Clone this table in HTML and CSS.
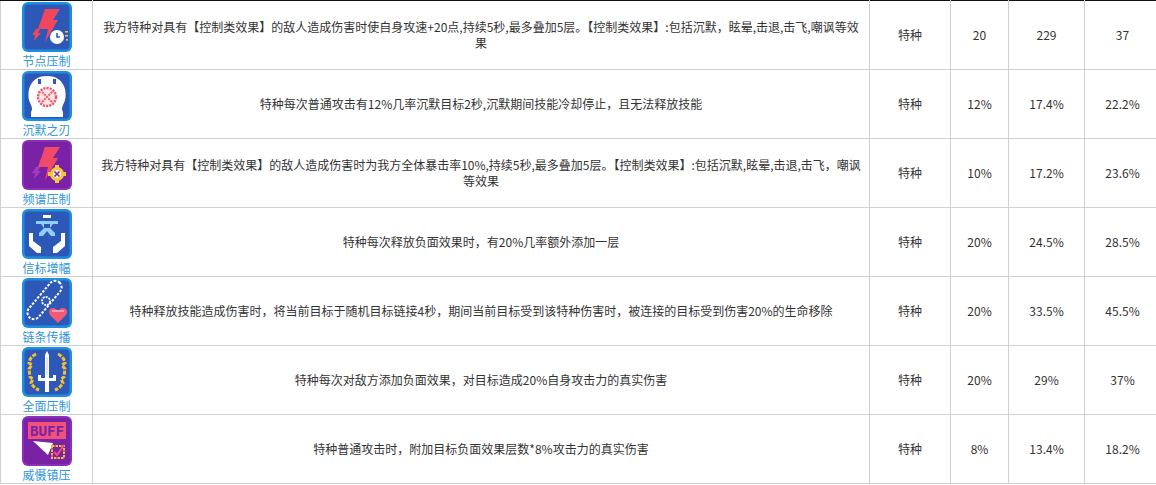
FILE: index.html
```html
<!DOCTYPE html>
<html lang="zh">
<head>
<meta charset="utf-8">
<title>特种芯片</title>
<link rel="stylesheet" href="styles.css">
</head>
<body>
<div class="top-line"></div>
<table class="chips">
<colgroup>
<col class="c-icon"><col class="c-desc"><col class="c-type"><col class="c-v1"><col class="c-v2"><col class="c-v3">
</colgroup>
<tbody>
<tr>
<td class="icon-cell">
<svg class="icon" viewBox="0 0 50 50">
<rect width="50" height="50" rx="6" fill="#1b8fe0"/>
<rect x="2.5" y="2.5" width="45" height="45" rx="4" fill="#2e58b8"/>
<polygon points="23,7 38,7 31,18 36,18 23,40 26,27 16,27" fill="#f0475d"/>
<polygon points="14,27 18,27 16,31 19,31 12,39 13,33 10,33" fill="#f0475d"/>
<circle cx="35" cy="35" r="7" fill="#fff"/>
<path d="M35 31 V35 H38" stroke="#2e58b8" stroke-width="1.6" fill="none"/>
<rect x="43" y="29" width="3" height="1.6" fill="#f3c040"/>
<rect x="43" y="33" width="3" height="1.6" fill="#f3c040"/>
<rect x="44" y="37" width="2" height="1.6" fill="#f3c040"/>
</svg>
<div class="label">节点压制</div>
</td>
<td class="desc">我方特种对具有【控制类效果】的敌人造成伤害时使自身攻速+20点,持续5秒,最多叠加5层。【控制类效果】:包括沉默，眩晕,击退,击飞,嘲讽等效果</td>
<td>特种</td><td>20</td><td>229</td><td>37</td>
</tr>
<tr>
<td class="icon-cell">
<svg class="icon" viewBox="0 0 50 50">
<rect width="50" height="50" rx="6" fill="#1b8fe0"/>
<rect x="2.5" y="2.5" width="45" height="45" rx="4" fill="#2e58b8"/>
<path d="M9 46 V41 Q11 38 9 34 Q5 27 7 18 Q11 5 25 5 Q39 5 43 18 Q45 27 41 34 Q39 38 41 41 V46 Z" fill="#fff"/>
<rect x="16" y="8" width="3" height="5" fill="#2e58b8"/>
<rect x="31" y="8" width="3" height="5" fill="#2e58b8"/>
<circle cx="25" cy="26" r="9" fill="#fbe3e6" stroke="#ec5a6c" stroke-width="2.4" stroke-dasharray="2.2 1"/>
<path d="M20 21 L30 31 M30 21 L20 31" stroke="#ec5a6c" stroke-width="2" stroke-dasharray="2 1"/>
</svg>
<div class="label">沉默之刃</div>
</td>
<td class="desc">特种每次普通攻击有12%几率沉默目标2秒,沉默期间技能冷却停止，且无法释放技能</td>
<td>特种</td><td>12%</td><td>17.4%</td><td>22.2%</td>
</tr>
<tr>
<td class="icon-cell">
<svg class="icon" viewBox="0 0 50 50">
<rect width="50" height="50" rx="6" fill="#8c30bc"/>
<rect x="2" y="2" width="46" height="46" rx="4" fill="#7a22a6"/>
<polygon points="23,7 38,7 31,18 36,18 23,40 26,27 16,27" fill="#f04a68"/>
<polygon points="14,27 18,27 16,31 19,31 12,39 13,33 10,33" fill="#a23cbc"/>
<circle cx="35" cy="34" r="7" fill="#f5c642"/>
<rect x="33" y="25" width="4" height="3" fill="#f5c642"/>
<rect x="33" y="40" width="4" height="3" fill="#f5c642"/>
<rect x="26" y="32" width="3" height="4" fill="#f5c642"/>
<rect x="41" y="32" width="3" height="4" fill="#f5c642"/>
<circle cx="35" cy="34" r="4" fill="#fff4d0"/>
<path d="M32.5 31.5 L37.5 36.5 M37.5 31.5 L32.5 36.5" stroke="#7a22a6" stroke-width="1.6"/>
</svg>
<div class="label">频谱压制</div>
</td>
<td class="desc">我方特种对具有【控制类效果】的敌人造成伤害时为我方全体暴击率10%,持续5秒,最多叠加5层。【控制类效果】:包括沉默,眩晕,击退,击飞，嘲讽等效果</td>
<td>特种</td><td>10%</td><td>17.2%</td><td>23.6%</td>
</tr>
<tr>
<td class="icon-cell">
<svg class="icon" viewBox="0 0 50 50">
<rect width="50" height="50" rx="6" fill="#1b8fe0"/>
<rect x="2.5" y="2.5" width="45" height="45" rx="4" fill="#2e58b8"/>
<rect x="21" y="6" width="8" height="3" fill="#fff"/>
<path d="M14 12 H36 V15 H31 L28 19 L33 24 V27 H29 L25 22 L21 27 H17 V24 L22 19 L19 15 H14 Z" fill="#8fd0f6"/>
<rect x="22" y="15" width="6" height="4" fill="#2e58b8"/>
<path d="M7 24 H11 V32 L19 38 V44 H15 L7 37 Z" fill="#fff"/>
<path d="M43 24 H39 V32 L31 38 V44 H35 L43 37 Z" fill="#fff"/>
</svg>
<div class="label">信标增幅</div>
</td>
<td class="desc">特种每次释放负面效果时，有20%几率额外添加一层</td>
<td>特种</td><td>20%</td><td>24.5%</td><td>28.5%</td>
</tr>
<tr>
<td class="icon-cell">
<svg class="icon" viewBox="0 0 50 50">
<rect width="50" height="50" rx="6" fill="#1b8fe0"/>
<rect x="2.5" y="2.5" width="45" height="45" rx="4" fill="#2e58b8"/>
<rect x="16" y="-1" width="13" height="46" rx="6.5" transform="rotate(40 22.5 22)" fill="none" stroke="#fff" stroke-width="2" stroke-dasharray="2.5 1.5"/>
<circle cx="24" cy="23" r="4" fill="none" stroke="#fff" stroke-width="1.8" stroke-dasharray="2 1"/>
<path d="M36 45 L28 37 Q26 34 28 31 Q31 29 34 31 L36 33 L38 31 Q41 29 44 31 Q46 34 44 37 Z" fill="#f05a74"/>
<path d="M30 33 H42" stroke="#ffd0d8" stroke-width="1.2"/>
</svg>
<div class="label">链条传播</div>
</td>
<td class="desc">特种释放技能造成伤害时，将当前目标于随机目标链接4秒，期间当前目标受到该特种伤害时，被连接的目标受到伤害20%的生命移除</td>
<td>特种</td><td>20%</td><td>33.5%</td><td>45.5%</td>
</tr>
<tr>
<td class="icon-cell">
<svg class="icon" viewBox="0 0 50 50">
<rect width="50" height="50" rx="6" fill="#1b8fe0"/>
<rect x="2.5" y="2.5" width="45" height="45" rx="4" fill="#2e58b8"/>
<path d="M14 7 Q8 10 7 16 L10 18 L7 22 L8 30 L11 32 L9 36 Q12 41 17 43" fill="none" stroke="#f3c030" stroke-width="3" stroke-dasharray="4 1.5"/>
<path d="M36 7 Q42 10 43 16 L40 18 L43 22 L42 30 L39 32 L41 36 Q38 41 33 43" fill="none" stroke="#f3c030" stroke-width="3" stroke-dasharray="4 1.5"/>
<path d="M23 8 L25 4 L27 8 V31 H23 Z" fill="#fff"/>
<rect x="16" y="31" width="18" height="3" fill="#fff"/>
<rect x="16" y="28" width="3" height="4" fill="#fff"/>
<rect x="31" y="28" width="3" height="4" fill="#fff"/>
<rect x="23" y="34" width="4" height="11" fill="#fff"/>
<rect x="24.5" y="10" width="1" height="18" fill="#b8cdf0"/>
</svg>
<div class="label">全面压制</div>
</td>
<td class="desc">特种每次对敌方添加负面效果，对目标造成20%自身攻击力的真实伤害</td>
<td>特种</td><td>20%</td><td>29%</td><td>37%</td>
</tr>
<tr>
<td class="icon-cell">
<svg class="icon" viewBox="0 0 50 50">
<rect width="50" height="50" rx="6" fill="#8c30bc"/>
<rect x="2" y="2" width="46" height="46" rx="4" fill="#7a22a6"/>
<rect x="6" y="6" width="38" height="17" fill="#f0507a"/>
<text x="8" y="19.5" class="buff" textLength="34" lengthAdjust="spacingAndGlyphs">BUFF</text>
<polygon points="11,25 31,27 26,39" fill="#fff"/>
<rect x="30" y="30" width="12" height="12" fill="none" stroke="#f3b830" stroke-width="2" stroke-dasharray="2.5 1"/>
<path d="M32 36 L35 39 L42 29" fill="none" stroke="#f0507a" stroke-width="2"/>
</svg>
<div class="label">威慑镇压</div>
</td>
<td class="desc">特种普通攻击时，附加目标负面效果层数*8%攻击力的真实伤害</td>
<td>特种</td><td>8%</td><td>13.4%</td><td>18.2%</td>
</tr>
</tbody>
</table>
</body>
</html>
```

FILE: styles.css
```css
html, body {
  margin: 0;
  padding: 0;
  background: #fff;
}
body {
  font-family: "Noto Sans CJK SC", "Microsoft YaHei", sans-serif;
  font-size: 12px;
  color: #333;
  overflow: hidden;
  width: 1156px;
}
.top-line {
  height: 1px;
  background: #111;
}
.chips {
  border-collapse: collapse;
  table-layout: fixed;
  width: 1160px;
  margin-top: -1px;
}
.c-icon { width: 92px; }
.c-desc { width: 777px; }
.c-type { width: 81px; }
.c-v1 { width: 58px; }
.c-v2 { width: 76px; }
.c-v3 { width: 76px; }
.chips td {
  border: 1px solid #d0d0d0;
  text-align: center;
  vertical-align: middle;
  padding: 0 8px;
  line-height: 16px;
}
.chips tr:first-child td {
  border-top-color: #111;
}
.chips td.icon-cell {
  padding: 1px 0 0;
}
.icon {
  display: block;
  width: 50px;
  height: 50px;
  margin: 0 auto;
}
.label {
  color: #2f95dc;
  line-height: 17px;
  font-size: 12px;
}
.buff {
  font-family: "DejaVu Sans Mono", monospace;
  font-weight: bold;
  font-size: 14px;
  fill: #7a22a6;
}
```
